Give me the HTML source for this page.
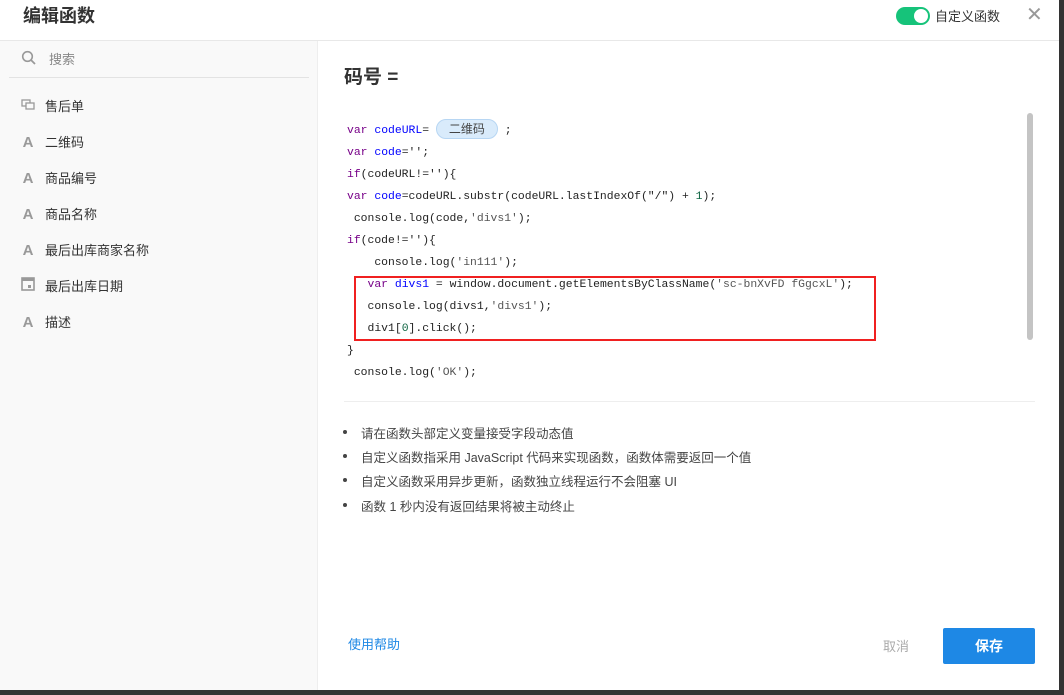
<!DOCTYPE html>
<html><head><meta charset="utf-8"><style>
*{margin:0;padding:0;box-sizing:border-box}
body{width:1064px;height:695px;background:#333;font-family:"Liberation Sans","Noto Sans CJK SC",sans-serif;position:relative;overflow:hidden}
#m{position:absolute;left:0;top:0;width:1059px;height:690px;background:#fff}
.hd{height:41px;border-bottom:1px solid #e8e8e8;position:relative}
.hd h1{position:absolute;left:23px;top:2px;font-size:18px;font-weight:bold;color:#333}
.tg{position:absolute;left:896px;top:7px;width:34px;height:18px;border-radius:9px;background:#16c37a}
.tg:after{content:"";position:absolute;right:2px;top:2px;width:14px;height:14px;border-radius:50%;background:#fff}
.tl{position:absolute;left:935px;top:6px;font-size:13px;color:#333}
.x{position:absolute;left:1026px;top:2px;font-size:20px;color:#999}
.sb{position:absolute;left:0;top:41px;width:318px;height:649px;background:#f9f9f9;border-right:1px solid #eee}
.se{position:absolute;left:9px;top:0;width:300px;height:37px;border-bottom:1px solid #e3e3e3}
.se span{position:absolute;left:40px;top:8px;font-size:13px;color:#888}
.it{position:absolute;left:20px;font-size:13px;color:#333}
.it i{display:inline-block;width:16px;font-style:normal;font-weight:bold;color:#999;font-size:15px;margin-right:9px;text-align:center}
h2{position:absolute;left:344px;top:62px;font-size:19px;color:#333;font-weight:bold}
.code{position:absolute;left:347px;top:119px;font-family:"Liberation Mono","Noto Sans CJK SC",monospace;font-size:11.4px;color:#222;line-height:22px;white-space:pre}
.k{color:#770088}.v{color:#0000ff}.s{color:#555}.n{color:#116644}
.pill{display:inline-block;background:#d9ebfb;border:1px solid #b7d6f3;border-radius:11px;padding:0 12px;font-family:"Liberation Sans","Noto Sans CJK SC",sans-serif;font-size:12px;line-height:18px;color:#444;vertical-align:middle;margin-bottom:2px}
.red{position:absolute;left:354px;top:276px;width:522px;height:65px;border:2px solid #f02020}
.scr{position:absolute;left:1027px;top:113px;width:6px;height:227px;background:#c4c4c4;border-radius:3px}
.hr{position:absolute;left:344px;top:401px;width:691px;border-top:1px solid #eee}
ul{position:absolute;left:361px;top:423px;font-size:12.5px;color:#444;list-style:none}
ul li{height:24.2px;position:relative}
ul li:before{content:"";position:absolute;left:-18px;top:7px;width:4px;height:4px;border-radius:50%;background:#444}
.help{position:absolute;left:348px;top:634px;font-size:13px;color:#1e88e5}
.cancel{position:absolute;left:883px;top:636px;font-size:13px;color:#aaa}
.save{position:absolute;left:943px;top:628px;width:92px;height:36px;background:#1e88e5;border-radius:2px;color:#fff;font-size:14px;font-weight:bold;text-align:center;line-height:36px}
</style></head><body><div id="m">
<div class="hd"><h1>编辑函数</h1><div class="tg"></div><div class="tl">自定义函数</div><div class="x">✕</div></div>
<div class="sb">
<div class="se"><svg style="position:absolute;left:12px;top:9px" width="16" height="16" viewBox="0 0 16 16"><circle cx="6.5" cy="6.5" r="4.8" fill="none" stroke="#999" stroke-width="1.6"/><path d="M10 10l4 4" stroke="#999" stroke-width="1.8"/></svg><span>搜索</span></div>
<div class="it" style="top:55px"><i><svg width="14" height="12" viewBox="0 0 14 12"><rect x="1" y="1" width="8" height="6" fill="none" stroke="#999" stroke-width="1.3"/><rect x="5" y="4" width="8" height="6" fill="#f9f9f9" stroke="#999" stroke-width="1.3"/></svg></i>售后单</div>
<div class="it" style="top:91px"><i>A</i>二维码</div>
<div class="it" style="top:127px"><i>A</i>商品编号</div>
<div class="it" style="top:163px"><i>A</i>商品名称</div>
<div class="it" style="top:199px"><i>A</i>最后出库商家名称</div>
<div class="it" style="top:235px"><i><svg width="14" height="15" viewBox="0 0 14 15"><rect x="1" y="2" width="12" height="12" fill="none" stroke="#999" stroke-width="1.6"/><rect x="1" y="2" width="12" height="3" fill="#999"/><rect x="7" y="9" width="3" height="3" fill="#999"/></svg></i>最后出库日期</div>
<div class="it" style="top:271px"><i>A</i>描述</div>
</div>
<h2>码号 =</h2>
<div class="code"><span class="k">var</span> <span class="v">codeURL</span>= <span class="pill">二维码</span> ;
<span class="k">var</span> <span class="v">code</span>='';
<span class="k">if</span>(codeURL!=''){
<span class="k">var</span> <span class="v">code</span>=codeURL.substr(codeURL.lastIndexOf("/") + <span class="n">1</span>);
 console.log(code,<span class="s">'divs1'</span>);
<span class="k">if</span>(code!=''){
    console.log(<span class="s">'in111'</span>);
   <span class="k">var</span> <span class="v">divs1</span> = window.document.getElementsByClassName(<span class="s">'sc-bnXvFD fGgcxL'</span>);
   console.log(divs1,<span class="s">'divs1'</span>);
   div1[<span class="n">0</span>].click();
}
 console.log(<span class="s">'OK'</span>);</div>
<div class="red"></div>
<div class="scr"></div>
<div class="hr"></div>
<ul><li>请在函数头部定义变量接受字段动态值</li><li>自定义函数指采用 JavaScript 代码来实现函数，函数体需要返回一个值</li><li>自定义函数采用异步更新，函数独立线程运行不会阻塞 UI</li><li>函数 1 秒内没有返回结果将被主动终止</li></ul>
<div class="help">使用帮助</div><div class="cancel">取消</div><div class="save">保存</div>
</div></body></html>
